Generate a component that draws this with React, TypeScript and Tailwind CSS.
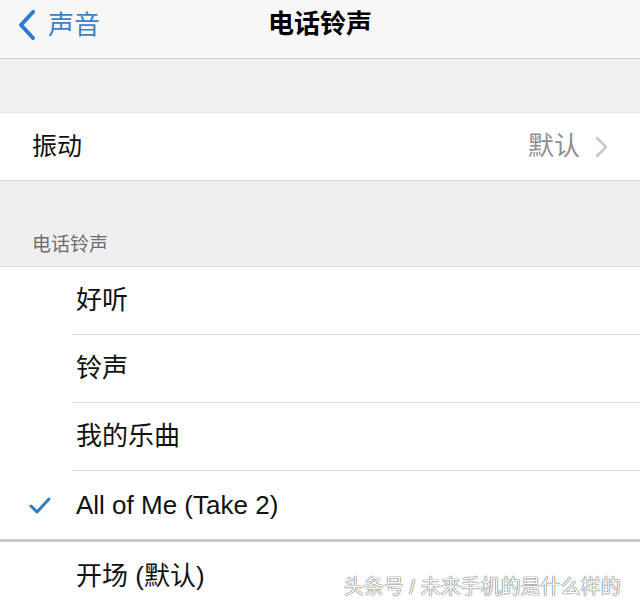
const font = { fontFamily: '"Liberation Sans", "Noto Sans CJK SC", sans-serif' };

const ringtones = [
    { name: "好听" },
    { name: "铃声" },
    { name: "我的乐曲" },
    { name: "All of Me (Take 2)", checked: true },
];

const CheckMark = () => (
    <svg width="22" height="18" viewBox="0 0 22 18" className="text-[#2f7fc0]">
        <polyline points="2,9 8,15 20,2" fill="none" stroke="currentColor" strokeWidth="3" strokeLinecap="round" strokeLinejoin="round" />
    </svg>
);

const Disclosure = () => (
    <svg width="13" height="22" viewBox="0 0 13 22" className="text-[#c7c7cc]">
        <polyline points="2,2 11,11 2,20" fill="none" stroke="currentColor" strokeWidth="2.5" strokeLinecap="round" strokeLinejoin="round" />
    </svg>
);

const ToneRow = ({ name, checked, last }: { name: string; checked?: boolean; last?: boolean }) => (
    <div className="flex h-[68px] bg-white">
        <div className="w-[72px] flex items-center justify-start pl-[29px] pt-[2px]">
            {checked && <CheckMark />}
        </div>
        <div className={`flex-1 flex items-center pl-[4px] ${last ? "" : "border-b border-[#dcdcdc]"}`}>
            <span className="text-[26px] text-[#111]">{name}</span>
        </div>
    </div>
);

export default function App() {
    return (
        <div className="w-[640px] h-[605px] overflow-hidden bg-[#efeff1] relative" style={font}>
            {/* nav bar */}
            <div className="h-[59px] bg-[#f7f7f7] border-b border-[#cfcfd2] flex items-center relative">
                <div className="flex items-center pl-[18px] pb-[8px] text-[#2b7cd3]">
                    <svg width="18" height="30" viewBox="0 0 18 30">
                        <polyline points="15,2 3,15 15,28" fill="none" stroke="currentColor" strokeWidth="4" strokeLinecap="round" strokeLinejoin="round" />
                    </svg>
                    <span className="ml-[12px] text-[26px] text-[#3b83c9]">声音</span>
                </div>
                <div className="absolute inset-x-0 top-[5px] text-center text-[26px] font-bold text-black pointer-events-none">电话铃声</div>
            </div>

            <div className="h-[54px] bg-[#efeff4] border-b border-[#e4e4e7]" />

            {/* vibration */}
            <div className="h-[68px] bg-white border-b border-[#dadada] flex items-center justify-between pl-[32px] pr-[32px]">
                <span className="text-[25px] text-[#111]">振动</span>
                <div className="flex items-center gap-[15px]">
                    <span className="text-[26px] text-[#8e8e93]">默认</span>
                    <Disclosure />
                </div>
            </div>

            {/* section header */}
            <div className="h-[86px] bg-[#efefef] border-b border-[#d9d9d9] flex items-end pl-[32px] pb-[7px]">
                <span className="text-[19px] text-[#6d6d72]">电话铃声</span>
            </div>

            {ringtones.map((t, i) => (
                <ToneRow key={t.name} name={t.name} checked={t.checked} last={i === ringtones.length - 1} />
            ))}

            <div className="h-[3px] bg-[#c9c9cc]" />

            <div className="flex h-[68px] bg-white items-center pl-[76px]">
                <span className="text-[26px] text-[#111]">开场 (默认)</span>
            </div>

            {/* watermark */}
            <div className="absolute left-[344px] top-[572px] text-[20px] text-white [text-shadow:0_0_1px_#444,0_0_1px_#444]">
                头条号 / 未来手机的是什么样的
            </div>
        </div>
    );
}
